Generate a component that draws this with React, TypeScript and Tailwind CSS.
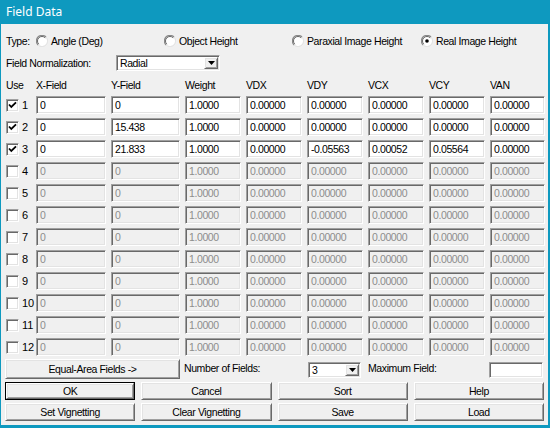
import React from "react"

const sunken =
    "border border-t-[#a0a0a0] border-l-[#a0a0a0] border-r-white border-b-white shadow-[inset_1px_1px_0_#696969,inset_-1px_-1px_0_#e3e3e3]"
const raised =
    "border border-t-white border-l-white border-r-[#696969] border-b-[#696969] shadow-[inset_1px_1px_0_#e3e3e3,inset_-1px_-1px_0_#a0a0a0] bg-[#f0f0f0]"

type Row = {
    x: string
    y: string
    w: string
    vdx: string
    vdy: string
    vcx: string
    vcy: string
    van: string
    on: boolean
}

const zero = "0.00000"
const rows: Row[] = [
    { x: "0", y: "0", w: "1.0000", vdx: zero, vdy: zero, vcx: zero, vcy: zero, van: zero, on: true },
    { x: "0", y: "15.438", w: "1.0000", vdx: zero, vdy: zero, vcx: zero, vcy: zero, van: zero, on: true },
    { x: "0", y: "21.833", w: "1.0000", vdx: zero, vdy: "-0.05563", vcx: "0.00052", vcy: "0.05564", van: zero, on: true },
]
for (let i = 3; i < 12; i++) {
    rows.push({ x: "0", y: "0", w: "1.0000", vdx: zero, vdy: zero, vcx: zero, vcy: zero, van: zero, on: false })
}

const headers = ["Use", "X-Field", "Y-Field", "Weight", "VDX", "VDY", "VCX", "VCY", "VAN"]
// first column + gap lands X-Field at x=36
const cols = "grid grid-cols-[25px_70px_69px_56px_56px_56px_56px_56px_55px] gap-x-[5px]"

const Field = ({ value, enabled }: { value: string; enabled: boolean }) => (
    <div
        className={
            "h-[18px] flex items-center pl-[3px] overflow-hidden whitespace-nowrap " +
            sunken +
            (enabled ? " bg-white text-black" : " bg-[#f0f0f0] text-[#8d8d8d]")
        }
    >
        {value}
    </div>
)

const Checkbox = ({ checked }: { checked: boolean }) => (
    <div className={"w-[13px] h-[13px] bg-white shrink-0 " + sunken}>
        {checked && (
            <svg width="11" height="11" viewBox="0 0 11 11">
                <path d="M2 4.5 L4.3 7 L9 2.3" fill="none" stroke="#000" strokeWidth="1.8" />
            </svg>
        )}
    </div>
)

const Radio = ({ checked }: { checked: boolean }) => (
    <svg width="12" height="12" viewBox="0 0 12 12" className="shrink-0">
        <circle cx="6" cy="6" r="5" fill="#fff" />
        <path d="M10 2 A5.5 5.5 0 0 0 2 10" fill="none" stroke="#8a8a8a" strokeWidth="1.2" />
        <path d="M9.2 2.8 A4.5 4.5 0 0 0 2.8 9.2" fill="none" stroke="#555" strokeWidth="0.9" />
        <path d="M2 10 A5.5 5.5 0 0 0 10 2" fill="none" stroke="#e3e3e3" strokeWidth="1" />
        {checked && <circle cx="6" cy="6" r="1.8" fill="#000" />}
    </svg>
)

const Combo = ({ value, width }: { value: string; width: string }) => (
    <div className={"h-[16px] flex items-center bg-white " + width + " " + sunken}>
        <span className="flex-1 pl-[3px]">{value}</span>
        <div className={"w-[14px] h-[12px] mr-[1px] flex items-center justify-center " + raised}>
            <svg width="7" height="4" viewBox="0 0 7 4">
                <polygon points="0,0 7,0 3.5,4" fill="#000" />
            </svg>
        </div>
    </div>
)

const Button = ({ label, def }: { label: string; def?: boolean }) => (
    <div className={def ? "border border-black h-full" : "h-full"}>
        <div className={"h-full flex items-center justify-center " + raised}>{label}</div>
    </div>
)

const App = () => {
    return (
        <div className="w-[550px] h-[428px] bg-[#0e99bf] flex flex-col font-['Liberation_Sans',Arial,sans-serif] text-[10.5px] tracking-[-0.4px] text-black leading-none">
            <div className="h-[24px] shrink-0 flex items-center px-[6px] text-white text-[12px] tracking-normal font-['Noto_Sans',sans-serif]">
                Field Data
            </div>
            <div className="flex-1 ml-[1px] mr-[2px] mb-[3px] bg-[#f0f0f0] flex flex-col">
                <div className="mt-[9px] h-[16px] flex items-center pl-[5px]">
                    <span className="w-[30px]">Type:</span>
                    <div className="w-[128px] flex items-center gap-[3px]">
                        <Radio checked={false} />
                        <span>Angle (Deg)</span>
                    </div>
                    <div className="w-[128px] flex items-center gap-[3px]">
                        <Radio checked={false} />
                        <span>Object Height</span>
                    </div>
                    <div className="w-[129px] flex items-center gap-[3px]">
                        <Radio checked={false} />
                        <span>Paraxial Image Height</span>
                    </div>
                    <div className="flex items-center gap-[3px]">
                        <Radio checked={true} />
                        <span>Real Image Height</span>
                    </div>
                </div>
                <div className="mt-[6px] h-[16px] flex items-center pl-[5px]">
                    <span className="w-[110px]">Field Normalization:</span>
                    <Combo value="Radial" width="w-[104px]" />
                </div>
                <div className={cols + " mt-[7px] h-[14px] items-center pl-[5px]"}>
                    {headers.map((h) => (
                        <span key={h}>{h}</span>
                    ))}
                </div>
                <div className={cols + " mt-[4px] gap-y-[4px] pl-[5px]"}>
                    {rows.map((r, i) => (
                        <React.Fragment key={i}>
                            <div className="flex items-center gap-[3px]">
                                <Checkbox checked={r.on} />
                                <span className="text-[11px] tracking-normal">{i + 1}</span>
                            </div>
                            <Field value={r.x} enabled={r.on} />
                            <Field value={r.y} enabled={r.on} />
                            <Field value={r.w} enabled={r.on} />
                            <Field value={r.vdx} enabled={r.on} />
                            <Field value={r.vdy} enabled={r.on} />
                            <Field value={r.vcx} enabled={r.on} />
                            <Field value={r.vcy} enabled={r.on} />
                            <Field value={r.van} enabled={r.on} />
                        </React.Fragment>
                    ))}
                </div>
                <div className="mt-[3px] h-[20px] flex items-start px-[4px]">
                    <div className="w-[175px] h-[20px]">
                        <Button label="Equal-Area Fields ->" />
                    </div>
                    <span className="w-[124px] ml-[4px] leading-[16px] mt-[1px]">Number of Fields:</span>
                    <div className="mt-[3px]">
                        <Combo value="3" width="w-[53px]" />
                    </div>
                    <span className="w-[121px] ml-[7px] leading-[16px] mt-[1px]">Maximum Field:</span>
                    <div className={"mt-[3px] w-[54px] h-[16px] bg-white " + sunken}></div>
                </div>
                <div className="mt-[3px] h-[18px] grid grid-cols-4 gap-x-[6px] px-[4px]">
                    <Button label="OK" def />
                    <Button label="Cancel" />
                    <Button label="Sort" />
                    <Button label="Help" />
                </div>
                <div className="mt-[3px] h-[18px] grid grid-cols-4 gap-x-[6px] px-[4px]">
                    <Button label="Set Vignetting" />
                    <Button label="Clear Vignetting" />
                    <Button label="Save" />
                    <Button label="Load" />
                </div>
            </div>
        </div>
    )
}

export default App
